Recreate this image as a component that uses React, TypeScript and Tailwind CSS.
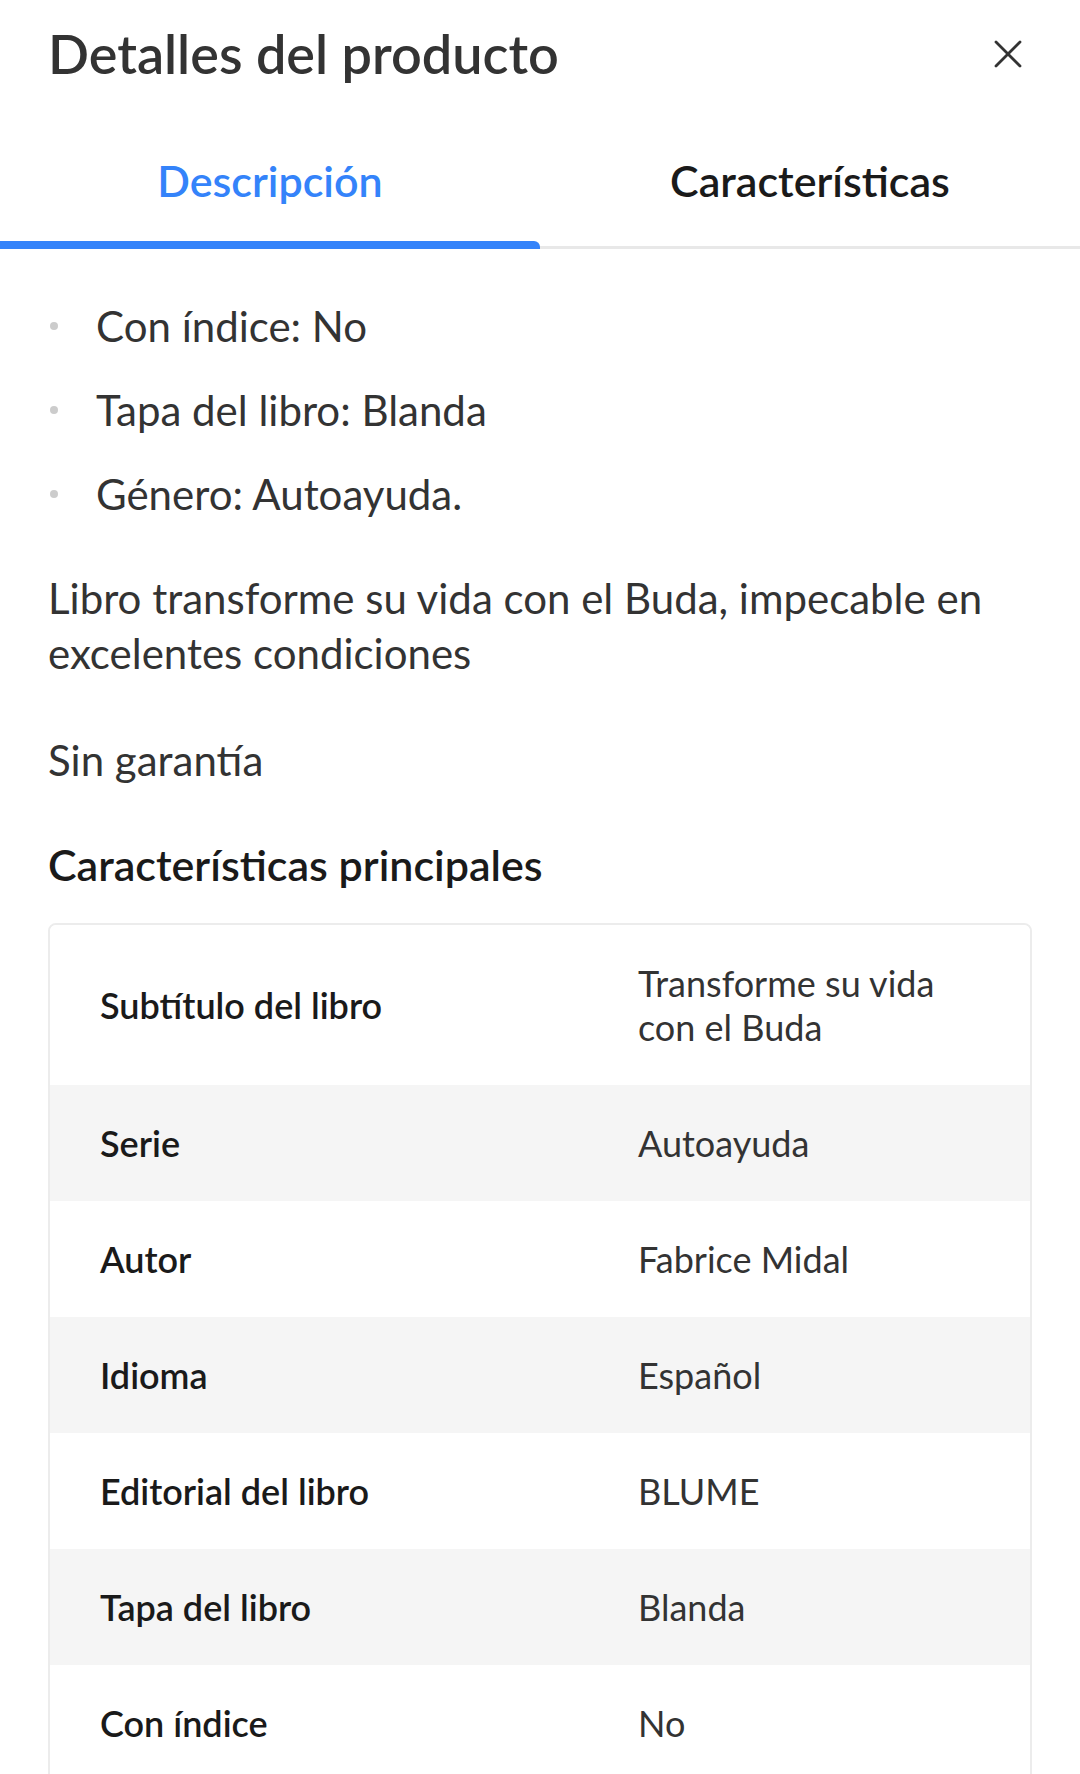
import { X } from "lucide-react";

const BULLETS = ["Con índice: No", "Tapa del libro: Blanda", "Género: Autoayuda."];

const SPECS: { label: string; value: string }[] = [
  { label: "Subtítulo del libro", value: "Transforme su vida con el Buda" },
  { label: "Serie", value: "Autoayuda" },
  { label: "Autor", value: "Fabrice Midal" },
  { label: "Idioma", value: "Español" },
  { label: "Editorial del libro", value: "BLUME" },
  { label: "Tapa del libro", value: "Blanda" },
  { label: "Con índice", value: "No" },
];

export default function App() {
  return (
    <div className="w-[1080px] h-[1774px] overflow-hidden bg-white font-['Lato',sans-serif] text-[#333333]">
      {/* header */}
      <div className="flex h-[108px] items-center justify-between pl-[48px] pr-[48px]">
        <h1 className="text-[54px] font-semibold leading-[60px] text-[#333333]">Detalles del producto</h1>
        <button type="button" aria-label="Cerrar" className="text-[#333333]">
          <X className="h-[48px] w-[48px]" strokeWidth={1.4} />
        </button>
      </div>

      {/* tabs */}
      <div className="grid grid-cols-2 border-b-[3px] border-[#e8e8e8]">
        <button type="button" className="relative flex h-[138px] items-center justify-center pt-[8px] text-[43px] font-semibold text-[#3483fa]">
          Descripción
          <span className="absolute bottom-[-3px] left-0 right-0 h-[8px] rounded-tr-[6px] bg-[#3483fa]" />
        </button>
        <button type="button" className="flex h-[138px] items-center justify-center pt-[8px] text-[43px] font-semibold text-[#1a1a1a]">
          Características
        </button>
      </div>

      {/* description */}
      <div className="px-[48px] pt-[50px]">
        <ul className="flex flex-col gap-[30px]">
          {BULLETS.map((b) => (
            <li key={b} className="flex items-center gap-[38px] text-[42px] leading-[54px]">
              <span className="ml-[2px] h-[8px] w-[8px] rounded-full bg-[#cccccc]" />
              {b}
            </li>
          ))}
        </ul>

        <p className="mt-[50px] text-[42px] leading-[55px]">
          Libro transforme su vida con el Buda, impecable en excelentes condiciones
        </p>
        <p className="mt-[52px] text-[42px] leading-[55px]">Sin garantía</p>

        <h2 className="mt-[50px] text-[43px] font-semibold leading-[54px] text-[#1a1a1a]">
          Características principales
        </h2>

        <div className="mt-[31px] overflow-hidden rounded-[8px] border-2 border-[#ececec]">
          {SPECS.map((s, i) => (
            <div
              key={s.label}
              className={`grid grid-cols-[588px_1fr] items-center py-[36px] text-[36px] leading-[44px] ${
                i % 2 === 1 ? "bg-[#f5f5f5]" : "bg-white"
              }`}
            >
              <span className="pl-[50px] font-semibold text-[#1a1a1a]">{s.label}</span>
              <span className="pr-[50px] text-[#333333]">{s.value}</span>
            </div>
          ))}
        </div>
      </div>
    </div>
  );
}
